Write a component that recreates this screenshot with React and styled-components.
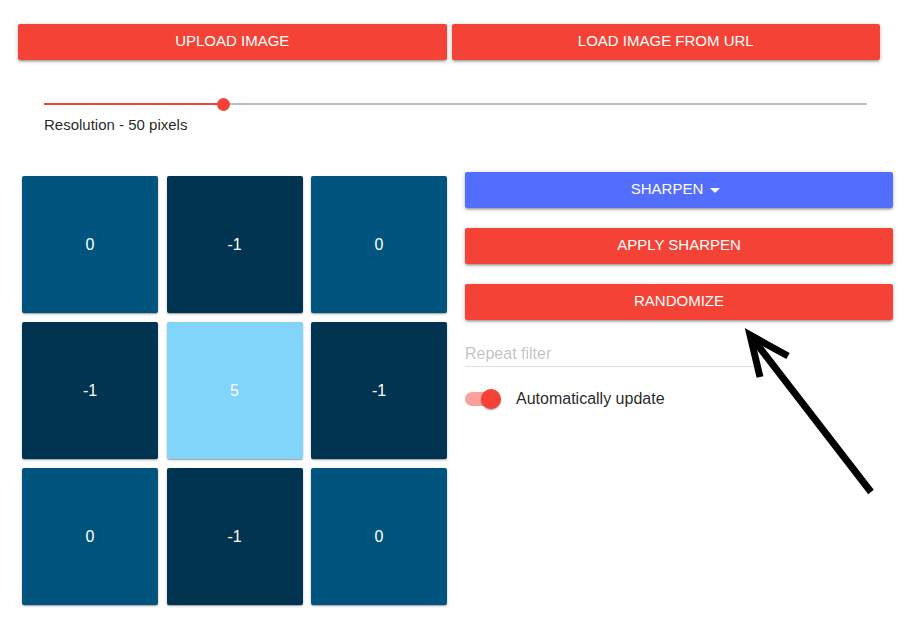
import React from "react";
import styled, { createGlobalStyle } from "styled-components";

const GlobalStyle = createGlobalStyle`
  html, body { margin: 0; padding: 0; background: #ffffff; }
  body { font-family: "Liberation Sans", Arial, sans-serif; color: rgba(0,0,0,0.87); }
  * { box-sizing: border-box; }
`;

const Page = styled.div`
  position: relative;
  width: 916px;
  height: 631px;
  overflow: hidden;
`;

const TopBar = styled.div`
  display: flex;
  gap: 5px;
  padding: 24px 36px 0 18px;
`;

const Button = styled.button`
  flex: ${(p) => (p.$grow ? 1 : "none")};
  height: 36px;
  width: ${(p) => (p.$grow ? "auto" : "100%")};
  display: flex;
  align-items: center;
  justify-content: center;
  border: none;
  border-radius: 2px;
  background: ${(p) => (p.$variant === "blue" ? "#536dfe" : "#f44336")};
  color: #ffffff;
  font-family: "Liberation Sans", Arial, sans-serif;
  font-size: 15px;
  line-height: 18px;
  text-transform: uppercase;
  padding: 0 16px 2px;
  box-shadow: 0 1px 5px 0 rgba(0,0,0,0.2), 0 2px 2px 0 rgba(0,0,0,0.14), 0 3px 1px -2px rgba(0,0,0,0.12);
  cursor: pointer;
`;

const SliderSection = styled.div`
  padding: 38px 49px 0 44px;
`;

const SliderTrack = styled.div`
  position: relative;
  height: 12px;
  display: flex;
  align-items: center;
`;

const TrackRail = styled.div`
  position: relative;
  width: 100%;
  height: 2px;
  background: #bdbdbd;
`;

const TrackFill = styled.div`
  position: absolute;
  left: 0;
  top: 0;
  height: 2px;
  background: #f44336;
`;

const Thumb = styled.div`
  position: absolute;
  top: 50%;
  width: 13px;
  height: 13px;
  margin-left: -6.5px;
  margin-top: -6.5px;
  border-radius: 50%;
  background: #f44336;
`;

const SliderLabel = styled.div`
  margin-top: 6px;
  font-size: 15px;
  line-height: 18px;
  color: rgba(0,0,0,0.87);
`;

const Main = styled.div`
  display: flex;
  gap: 18px;
  margin-top: 38px;
  padding-left: 22px;
`;

const KernelGrid = styled.div`
  display: grid;
  grid-template-columns: repeat(3, 136px);
  grid-auto-rows: 137px;
  column-gap: 8.5px;
  row-gap: 9px;
  margin-top: 4px;
`;

const Cell = styled.div`
  display: flex;
  align-items: center;
  justify-content: center;
  border-radius: 2px;
  background: ${(p) => p.$bg};
  color: #ffffff;
  font-size: 16px;
  box-shadow: 0 1px 3px rgba(0,0,0,0.2), 0 1px 1px rgba(0,0,0,0.14), 0 2px 1px -1px rgba(0,0,0,0.12);
`;

const Controls = styled.div`
  width: 428px;
  display: flex;
  flex-direction: column;
  gap: 20px;
`;

const ButtonStack = styled.div`
  display: flex;
  flex-direction: column;
  gap: 20px;
`;

const Caret = styled.svg`
  width: 24px;
  height: 24px;
  fill: #ffffff;
  margin-bottom: -2px;
`;

const FieldWrap = styled.div`
  width: 290px;
  margin-top: -4px;
  border-bottom: 1px solid #e0e0e0;
`;

const Input = styled.input`
  width: 100%;
  border: none;
  outline: none;
  padding: 8px 0 3px;
  font-family: "Liberation Sans", Arial, sans-serif;
  font-size: 16px;
  line-height: 19px;
  height: 30px;
  background: transparent;
  &::placeholder { color: rgba(0,0,0,0.26); }
`;

const ToggleRow = styled.label`
  display: flex;
  align-items: center;
  height: 24px;
`;

const Switch = styled.span`
  position: relative;
  width: 36px;
  height: 20px;
  display: inline-block;
`;

const SwitchTrack = styled.span`
  position: absolute;
  left: 0;
  top: 3px;
  width: 34px;
  height: 14px;
  border-radius: 7px;
  background: rgba(244,67,54,0.5);
`;

const SwitchThumb = styled.span`
  position: absolute;
  left: 16px;
  top: 0;
  width: 20px;
  height: 20px;
  border-radius: 50%;
  background: #f44336;
  box-shadow: 0 1px 3px rgba(0,0,0,0.2), 0 1px 1px rgba(0,0,0,0.14), 0 2px 1px -1px rgba(0,0,0,0.12);
`;

const ToggleLabel = styled.span`
  margin-left: 15px;
  font-size: 16px;
  color: rgba(0,0,0,0.87);
`;

const Annotation = styled.svg`
  position: absolute;
  left: 0;
  top: 0;
  width: 916px;
  height: 631px;
  pointer-events: none;
`;

const MED = "#01547e";
const DARK = "#013450";
const LIGHT = "#81d4fa";

const kernel = [0, -1, 0, -1, 5, -1, 0, -1, 0];
const colorFor = (v) => (v === 5 ? LIGHT : v === -1 ? DARK : MED);

export default function App() {
  const min = 10;
  const max = 193;
  const value = 50;
  const pct = ((value - min) / (max - min)) * 100;

  return (
    <Page>
      <GlobalStyle />
      <TopBar>
        <Button $grow>Upload image</Button>
        <Button $grow>Load image from URL</Button>
      </TopBar>

      <SliderSection>
        <SliderTrack>
          <TrackRail>
            <TrackFill style={{ width: `${pct}%` }} />
          </TrackRail>
          <Thumb style={{ left: `${pct}%` }} />
        </SliderTrack>
        <SliderLabel>Resolution - {value} pixels</SliderLabel>
      </SliderSection>

      <Main>
        <KernelGrid>
          {kernel.map((v, i) => (
            <Cell key={i} $bg={colorFor(v)}>
              {v}
            </Cell>
          ))}
        </KernelGrid>

        <Controls>
          <ButtonStack>
            <Button $variant="blue">
              Sharpen
              <Caret viewBox="0 0 24 24">
                <path d="M7 10l5 5 5-5z" />
              </Caret>
            </Button>
            <Button>Apply sharpen</Button>
            <Button>Randomize</Button>
          </ButtonStack>
          <FieldWrap>
            <Input placeholder="Repeat filter" />
          </FieldWrap>
          <ToggleRow>
            <Switch>
              <SwitchTrack />
              <SwitchThumb />
            </Switch>
            <ToggleLabel>Automatically update</ToggleLabel>
          </ToggleRow>
        </Controls>
      </Main>

      <Annotation viewBox="0 0 916 631">
        <line x1="871" y1="492" x2="753" y2="339" stroke="#000" strokeWidth="7" />
        <polyline
          points="788,356 750,335 760,377"
          fill="none"
          stroke="#000"
          strokeWidth="7"
          strokeLinejoin="miter"
          strokeMiterlimit="10"
        />
      </Annotation>
    </Page>
  );
}
